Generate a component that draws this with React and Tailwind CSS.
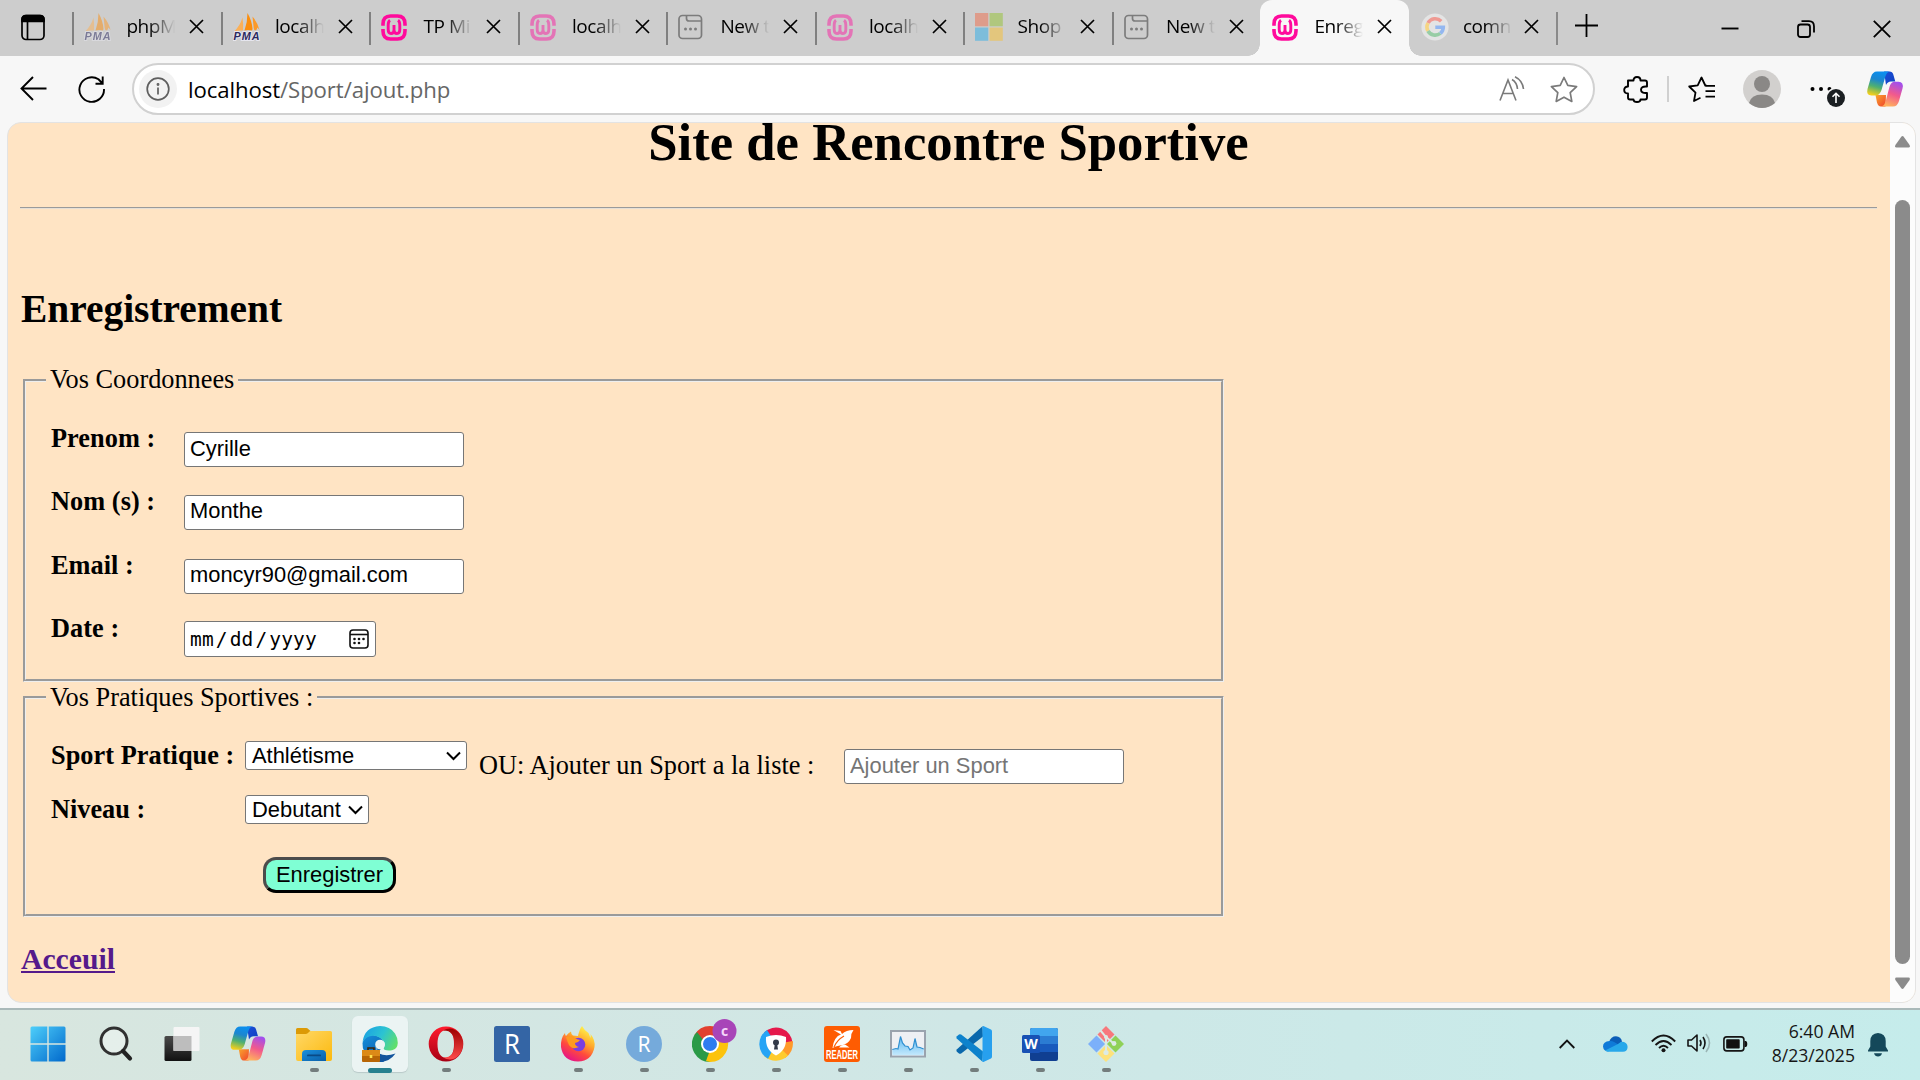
import React from "react";

const ui = "font-['Open_Sans','Noto_Sans',sans-serif]";

/* ---------- favicons ---------- */
function PmaIcon({ dim }) {
  return (
    <svg width="28" height="28" viewBox="0 0 28 28" className={dim ? "opacity-50" : ""}>
      <path d="M9.500 4.500 Q10.500 11 10 17.500 Q5 17 1 18.500 Q7 13 9.500 4.500Z" fill="#fbb057" />
      <path d="M14.500 0 Q19 8 19.500 16 L19 17.500 Q15 16.500 11.500 17.500 Q14.500 9 14.500 0Z" fill="#fb8d0c" />
      <path d="M19.500 3.500 Q25 10 26.500 17 L24.500 14.500 Q24 17 22 17.500 Q21 17 20.700 15Z" fill="#fb9a2a" />
      <text x="0.500" y="26.500" fontFamily="Liberation Sans" fontSize="10.800" fontWeight="700" fontStyle="italic" fill="#2b2960" stroke="#e6e6ee" strokeWidth="2" paintOrder="stroke" textLength="26">PMA</text>
    </svg>
  );
}
function WampIcon({ dim }) {
  return (
    <svg width="26" height="27" viewBox="0 0 26 27" className={dim ? "opacity-45" : ""} fill="none" stroke="#ff0a9c">
      <path d="M2 11.800 V10 Q2 2 9.500 2 H16.500 Q24 2 24 10 V11.800" strokeWidth="3.600" />
      <path d="M2 15 V17 Q2 25 9.500 25 H16.500 Q24 25 24 17 V15" strokeWidth="3.600" />
      <path d="M9 6.300 Q7.200 7.500 7.200 11 V15.500 Q7.200 19.500 10 19.500 Q13 19.500 13 16 V11 V16 Q13 19.500 16 19.500 Q18.800 19.500 18.800 15.500 V11 Q18.800 7.500 17 6.300" strokeWidth="2.900" />
    </svg>
  );
}
function NewTabIcon() {
  return (
    <svg width="25" height="26" viewBox="0 0 25 26" fill="none" stroke="#7c7c7c" strokeWidth="1.700">
      <rect x="1" y="1.500" width="22.500" height="23" rx="3.500" />
      <path d="M8.500 1.500 V4.500 Q8.500 7 11 7 H23" />
      <g fill="#7c7c7c" stroke="none">
        <circle cx="7.500" cy="15" r="1.500" /><circle cx="12.500" cy="15" r="1.500" /><circle cx="17.500" cy="15" r="1.500" />
      </g>
    </svg>
  );
}
function MsIcon() {
  return (
    <svg width="28" height="28" viewBox="0 0 28 28">
      <path fill="#de9c8b" d="M0 0h13.300v13.300H0z" /><path fill="#b0c77e" d="M14.500 0h13.300v13.300H14.500z" />
      <path fill="#7dbddb" d="M0 14.500h13.300v13.300H0z" /><path fill="#e3c67d" d="M14.500 14.500h13.300v13.300H14.500z" />
    </svg>
  );
}
function GoogleIcon() {
  return (
    <svg width="28" height="28" viewBox="0 0 28 28" fill="none" strokeWidth="3.600">
      <circle cx="14" cy="14" r="13.600" fill="#e4e4e4" />
      <path d="M20.200 8.200 A8.300 8.300 0 0 0 7 10" stroke="#ef9a93" />
      <path d="M7 10 A8.300 8.300 0 0 0 7 18" stroke="#f6d583" />
      <path d="M7 18 A8.300 8.300 0 0 0 19.300 20.400" stroke="#98cda5" />
      <path d="M19.300 20.400 A8.300 8.300 0 0 0 22.300 14.200 H14.300" stroke="#93b7f0" />
    </svg>
  );
}
const favicons = { pma: PmaIcon, wamp: WampIcon, blank: NewTabIcon, ms: MsIcon, google: GoogleIcon };

const tabs = [
  { icon: "pma", dim: true, title: "phpM" },
  { icon: "pma", title: "localh" },
  { icon: "wamp", title: "TP Mi" },
  { icon: "wamp", dim: true, title: "localh" },
  { icon: "blank", title: "New t" },
  { icon: "wamp", dim: true, title: "localh" },
  { icon: "ms", title: "Shop" },
  { icon: "blank", title: "New t" },
  { icon: "wamp", title: "Enreg", active: true },
  { icon: "google", title: "comn" },
];

function Tab({ icon, dim, title, active, index }) {
  const Icon = favicons[icon];
  const line = !active && index !== 9;
  return (
    <div className={"relative flex h-14 w-[148.5px] shrink-0 items-start " + (active ? "rounded-t-xl bg-[#f7f7f7]" : "")}>
      {active && (
        <>
          <span className="absolute bottom-0 -left-3 size-3 bg-[radial-gradient(circle_at_0_0,#cdcdcd_11.5px,#f7f7f7_12px)]" />
          <span className="absolute -right-3 bottom-0 size-3 bg-[radial-gradient(circle_at_100%_0,#cdcdcd_11.5px,#f7f7f7_12px)]" />
        </>
      )}
      <span className={"mt-3 h-[33px] w-0.5 shrink-0 " + (line ? "bg-[#808080]" : "")} />
      <span className="mt-[13px] ml-[10px] flex h-7 w-7 shrink-0 items-center"><Icon dim={dim} /></span>
      <span className={"mt-3 ml-[14px] w-[50px] shrink-0 overflow-hidden text-[19px] leading-7 tracking-[-0.4px] whitespace-nowrap text-black [mask-image:linear-gradient(to_right,black_45%,transparent_98%)] " + ui}>{title}</span>
      <svg className={"mt-[19px] shrink-0 " + (index === 9 ? "ml-[11px]" : "ml-[13px]")} width="15" height="15" viewBox="0 0 15 15" stroke="#000" strokeWidth="1.700"><path d="M1 1 L14 14 M14 1 L1 14" /></svg>
    </div>
  );
}

function TabBar() {
  return (
    <div className="flex h-14 bg-[#cdcdcd]">
      <div className="flex w-[72.4px] shrink-0 pt-[14px] pl-[21px]">
        <svg width="24" height="27" viewBox="0 0 24 27" fill="none" stroke="#000" strokeWidth="1.700">
          <rect x="1" y="1.500" width="22" height="24" rx="4" />
          <path d="M1 7.500 V5.500 Q1 1.500 5 1.500 H19 Q23 1.500 23 5.500 V7.500Z" fill="#000" />
          <path d="M6.500 7 V25.500" />
        </svg>
      </div>
      {tabs.map((t, i) => <Tab key={i} index={i} {...t} />)}
      <span className="mt-3 ml-[-1px] h-[33px] w-0.5 shrink-0 bg-[#8a8a8a]" />
      <svg className="mt-[14px] ml-[17px] shrink-0" width="23" height="23" viewBox="0 0 23 23" stroke="#000" strokeWidth="1.800"><path d="M0 11.500 H23 M11.500 0 V23" /></svg>
      <div className="ml-auto flex w-[228px] items-center pt-px">
        <span className="flex w-[76px] justify-center"><svg width="18" height="18" viewBox="0 0 18 18" stroke="#000" strokeWidth="1.900"><path d="M0.500 8.500 H17.500" /></svg></span>
        <span className="flex w-[76px] justify-center">
          <svg width="18" height="18" viewBox="0 0 18 18" fill="none" stroke="#000" strokeWidth="1.800"><rect x="1" y="4.500" width="12" height="12.500" rx="2.500" /><path d="M4.500 1.200 H12 Q17 1.200 17 6.500 V12.500" /></svg>
        </span>
        <span className="flex w-[76px] justify-center"><svg width="18" height="18" viewBox="0 0 18 18" stroke="#000" strokeWidth="1.800"><path d="M0.800 0.800 L17.200 17.200 M17.200 0.800 L0.800 17.200" /></svg></span>
      </div>
    </div>
  );
}

function CopilotIcon({ id, w, h }) {
  return (
    <svg width={w} height={h} viewBox="0 0 36 36">
      <defs>
        <linearGradient id={id + "a"} x1="0.600" y1="0" x2="0.350" y2="1"><stop offset="0" stopColor="#0a8ff0" /><stop offset="0.350" stopColor="#1c86cf" /><stop offset="0.650" stopColor="#4fb070" /><stop offset="1" stopColor="#f2cf1d" /></linearGradient>
        <linearGradient id={id + "b"} x1="0.700" y1="0" x2="0.350" y2="1"><stop offset="0" stopColor="#a14fee" /><stop offset="0.500" stopColor="#f25a8c" /><stop offset="1" stopColor="#ffb35c" /></linearGradient>
        <linearGradient id={id + "c"} x1="0" y1="0" x2="1" y2="1"><stop offset="0" stopColor="#1a4fd8" /><stop offset="1" stopColor="#1040c0" /></linearGradient>
        <linearGradient id={id + "d"} x1="0" y1="0" x2="1" y2="1"><stop offset="0" stopColor="#f9a52c" /><stop offset="1" stopColor="#f0442e" /></linearGradient>
      </defs>
      <path d="M17 0.500 H22.500 Q25.500 0.500 26.300 3.500 L28.300 10.500 H24 Q20.500 10.500 19 14Z" fill={"url(#" + id + "c)"} />
      <path d="M8.500 24 L10 31.500 Q11 35.500 14 35.500 H18.500 L19 24Z" fill={"url(#" + id + "d)"} />
      <path d="M10 0.500 H22 Q19.500 1.500 18.500 5 L14.500 19 Q12.800 24.500 8 24.500 H4.500 Q-1 24.500 0.500 18 L4 6 Q5.600 0.500 10 0.500Z" fill={"url(#" + id + "a)"} />
      <path d="M26 35.500 H14.500 Q17.500 34.500 18.500 31 L22.300 16.500 Q23.600 10.800 28 10.800 H31.500 Q37 10.800 35.500 17.500 L32 30 Q30.400 35.500 26 35.500Z" fill={"url(#" + id + "b)"} />
    </svg>
  );
}

function Toolbar() {
  return (
    <div className="flex h-[66px] bg-[#f7f7f7]">
      <svg className="mt-5 ml-5 shrink-0" width="27" height="25" viewBox="0 0 27 25" fill="none" stroke="#000" strokeWidth="1.900"><path d="M26.500 12.500 H1.500 M13 1 L1.500 12.500 L13 24" /></svg>
      <svg className="mt-5 ml-[31px] shrink-0" width="28" height="27" viewBox="0 0 28 27" fill="none" stroke="#000" strokeWidth="1.900"><path d="M26 13 A12.300 12.300 0 1 1 20.500 3.300 L24.500 7.500 M24.700 0.500 V7.700 H17.500" /></svg>
      <div className="mt-[7px] ml-[26px] flex h-[52px] w-[1463px] shrink-0 items-center rounded-full border-2 border-[#d1d1d1] bg-white">
        <span className="ml-[5px] flex size-[38px] items-center justify-center rounded-full bg-[#f2f2f2]">
          <svg width="24" height="24" viewBox="0 0 24 24" fill="none" stroke="#5f5f5f" strokeWidth="1.700"><circle cx="12" cy="12" r="10.800" /><path d="M12 10.500 V17.500" /><circle cx="12" cy="7.500" r="0.600" fill="#5f5f5f" /></svg>
        </span>
        <span className={"mt-px ml-[11px] text-[22.2px] leading-8 tracking-[-0.1px] whitespace-nowrap text-[#666] " + ui}><span className="text-black">localhost</span>/Sport/ajout.php</span>
        <svg className="ml-auto shrink-0" width="26" height="26" viewBox="0 0 26 26" fill="none" stroke="#7a7a7a" strokeWidth="1.600"><path d="M1 24.500 L9 4 L17 24.500 M4 17.500 H14 M13 3.500 Q18 6.500 18.500 13 M16 0.800 Q23.500 4.500 24.500 13" /></svg>
        <svg className="mr-[15px] ml-[25px] shrink-0" width="28" height="27" viewBox="0 0 28 27" fill="none" stroke="#7a7a7a" strokeWidth="1.700" strokeLinejoin="round"><path d="M14 1.500 L17.800 9.400 L26.600 10.600 L20.200 16.700 L21.800 25.400 L14 21.200 L6.200 25.400 L7.800 16.700 L1.400 10.600 L10.200 9.400Z" /></svg>
      </div>
      <svg className="mt-5 ml-7 shrink-0" width="26" height="27" viewBox="0 0 26 27" fill="none" stroke="#000" strokeWidth="1.900" strokeLinejoin="round"><path d="M5 4.500 H10.500 Q10.500 1 14 1 Q17.500 1 17.500 4.500 H22 Q24 4.500 24 6.500 V10.500 Q18 10 18 13.800 Q18 17.500 24 17 V21.500 Q24 23.500 22 23.500 H17.500 Q17.500 26 14 26 Q10.500 26 10.500 23.500 H7 Q5 23.500 5 21.500 V17.500 Q1.200 17.500 1.200 14 Q1.200 10.500 5 10.500Z" /></svg>
      <span className="mt-5 ml-[18px] h-[26px] w-0.5 shrink-0 bg-[#d0d0d0]" />
      <svg className="mt-5 ml-[19px] shrink-0" width="28" height="27" viewBox="0 0 28 27" fill="none" stroke="#000" strokeWidth="1.800" strokeLinejoin="round"><path d="M18.500 9.500 H17.300 L13.500 1.500 L9.700 9.300 L1.200 10.500 L7.500 16.700 L6 25 L12.500 21.800 M17.500 9.800 H27 M17.500 15.200 H27 M17.500 20.600 H27" /></svg>
      <svg className="mt-[14px] ml-[27px] shrink-0" width="38" height="38" viewBox="0 0 38 38">
        <circle cx="19" cy="19" r="19" fill="#d2d0ce" /><circle cx="19" cy="14" r="8" fill="#8a8886" /><path d="M6 33 Q8 24.500 19 24.500 Q30 24.500 32 33 Q26 38 19 38 Q12 38 6 33Z" fill="#8a8886" />
      </svg>
      <svg className="mt-[26px] ml-7 shrink-0" width="38" height="26" viewBox="0 0 38 26">
        <circle cx="3.500" cy="7" r="2" /><circle cx="12" cy="7" r="2" /><circle cx="20.500" cy="7" r="2" />
        <circle cx="27" cy="16" r="10.500" fill="#f7f7f7" /><circle cx="27" cy="16" r="9" fill="#1b1f22" />
        <path d="M27 21 V11.500 M23.500 14.800 L27 11.300 L30.500 14.800" stroke="#fff" strokeWidth="1.600" fill="none" />
      </svg>
      <span className="mt-[15px] ml-[19px]"><CopilotIcon id="ct" w="38" h="36" /></span>
    </div>
  );
}

/* ---------- page ---------- */
const field = "rounded-[3px] border border-[#767676] bg-white pl-[5px] pb-[2px] font-['Liberation_Sans',Arial,sans-serif] text-[21.9px] text-black placeholder:text-[#757575] outline-none";

function Row({ label, children }) {
  return (
    <div className="flex h-[63.4px] items-start">
      <label className="mt-px w-[133px] font-bold leading-[30px] tracking-[0.05px]">{label}</label>
      {children}
    </div>
  );
}

function Select({ value, className }) {
  return (
    <div className={"mt-px flex h-[29px] items-center justify-between rounded-[3px] border border-[#767676] bg-white pr-[5px] pl-[6px] font-['Liberation_Sans',Arial,sans-serif] text-[21.9px] leading-none " + className}>
      <span>{value}</span>
      <svg width="15" height="10" viewBox="0 0 15 10" fill="none" stroke="#000" strokeWidth="2"><path d="M1 1.500 L7.500 8 L14 1.500" /></svg>
    </div>
  );
}

const fieldset = "ml-[3px] w-[1201px] border-[3px] border-[#eeeeee] pl-5 [border-style:groove]";

function Page() {
  return (
    <div className="ml-[7px] flex h-[881px] w-[1909px] overflow-hidden rounded-[14px] border border-[#e3e3e3] bg-[#ffe4c4]">
      <main className="h-full grow overflow-hidden pr-[13px] pl-[12px] font-['Liberation_Serif','Times_New_Roman',serif] text-[26.3px] text-black">
        <h1 className="mt-[-11px] text-center text-[52.7px] leading-[60px] font-bold">Site de Rencontre Sportive</h1>
        <div className="mt-[35px] h-[2px] border-t border-b border-t-[#9a9a9a] border-b-[#e6dfd6]" />
        <h2 className="mt-[78px] ml-px text-[39.4px] leading-[44px] font-bold">Enregistrement</h2>
        <fieldset className={"mt-[34px] h-[317px] " + fieldset}>
          <legend className="px-1 pb-px leading-[30px]">Vos Coordonnees</legend>
          <div className="pt-[27px] pl-[5px]">
            <Row label="Prenom :"><input className={"mt-[9px] h-[35px] w-[280px] " + field} defaultValue="Cyrille" /></Row>
            <Row label="Nom (s) :"><input className={"mt-[8.5px] h-[35px] w-[280px] " + field} defaultValue="Monthe" /></Row>
            <Row label="Email :"><input className={"mt-[9px] h-[35px] w-[280px] " + field} defaultValue="moncyr90@gmail.com" /></Row>
            <Row label="Date :">
              <div className="mt-2 flex h-9 w-[192px] items-center justify-between rounded-[3px] border border-[#767676] bg-white pr-[6px] pl-[5px] font-['DejaVu_Sans_Mono',monospace] text-[19.5px] tracking-[0.15px]">
                <span className="flex pt-px"><span>mm</span><span className="px-[2px]">/</span><span>dd</span><span className="px-[2px]">/</span><span>yyyy</span></span>
                <svg width="20" height="20" viewBox="0 0 20 20" fill="none" stroke="#111" strokeWidth="1.600">
                  <rect x="1" y="1" width="18" height="18" rx="3" /><path d="M1 5.500 H19" />
                  <g fill="#111" stroke="none"><circle cx="5.500" cy="14" r="1.300" /><circle cx="10" cy="10" r="1.300" /><circle cx="14.500" cy="10" r="1.300" /><circle cx="5.500" cy="10" r="1.300" /><circle cx="10" cy="14" r="1.300" /></g>
                </svg>
              </div>
            </Row>
          </div>
        </fieldset>
        <fieldset className={"mt-px h-[234px] " + fieldset}>
          <legend className="px-1 leading-[29px]">Vos Pratiques Sportives :</legend>
          <div className="pt-[28px] pl-[5px]">
            <div className="flex h-[54px] items-start leading-[30px]">
              <label className="mt-px w-[194px] font-bold tracking-[0.05px]">Sport Pratique :</label>
              <Select value="Athlétisme" className="w-[222px]" />
              <span className="mt-[11px] ml-3 w-[365px] whitespace-nowrap">OU: Ajouter un Sport a la liste :</span>
              <input className={"mt-[9px] h-[35px] w-[280px] " + field} placeholder="Ajouter un Sport" />
            </div>
            <div className="flex h-[63px] items-start leading-[30px]">
              <label className="mt-px w-[194px] font-bold">Niveau :</label>
              <Select value="Debutant" className="w-[124px]" />
            </div>
            <button className="ml-[212px] flex h-9 w-[133px] items-center justify-center rounded-[13px] border-[3px] border-t-[#4c4c4c] border-r-black border-b-black border-l-[#4c4c4c] bg-[#7fffd4] pb-px font-['Liberation_Sans',Arial,sans-serif] text-[21.9px] leading-none">Enregistrer</button>
          </div>
        </fieldset>
        <a className="mt-[25px] ml-px inline-block text-[29.7px] leading-[34px] font-bold text-[#551a8b] underline decoration-2 underline-offset-2">Acceuil</a>
      </main>
      <div className="flex w-[25px] shrink-0 flex-col items-center bg-[#fcfcfc] pt-[13px]">
        <svg width="15" height="12" viewBox="0 0 15 12" fill="#8b8b8b"><path d="M6.300 0.700 Q7.500 -0.700 8.700 0.700 L14.600 9 Q15.500 11.500 13.500 11.500 H1.500 Q-0.500 11.500 0.400 9Z" /></svg>
        <span className="mt-[52px] h-[764px] w-[15px] rounded-full bg-[#8b8b8b]" />
        <svg className="mt-[13px]" width="15" height="12" viewBox="0 0 15 12" fill="#8b8b8b"><path d="M6.300 11.300 Q7.500 12.500 8.700 11.300 L14.600 3 Q15.500 0.500 13.500 0.500 H1.500 Q-0.500 0.500 0.400 3Z" /></svg>
      </div>
    </div>
  );
}

/* ---------- taskbar ---------- */
const S = ({ children, ...p }) => <svg width="36" height="36" viewBox="0 0 36 36" {...p}>{children}</svg>;

const StartIcon = () => (
  <S>
    <defs><linearGradient id="win" gradientUnits="userSpaceOnUse" x1="0" y1="0" x2="36" y2="36"><stop offset="0" stopColor="#4fd0fb" /><stop offset="1" stopColor="#0067cb" /></linearGradient></defs>
    <g fill="url(#win)"><path d="M2 0.500H17.300V17.300H0.500V2Q0.500 0.500 2 0.500Z" /><path d="M18.700 0.500H34Q35.500 0.500 35.500 2V17.300H18.700Z" /><path d="M0.500 18.700H17.300V35.500H2Q0.500 35.500 0.500 34Z" /><path d="M18.700 18.700H35.500V34Q35.500 35.500 34 35.500H18.700Z" /></g>
  </S>
);
const SearchIcon = () => (
  <S fill="none"><circle cx="16" cy="15" r="13" fill="#ffffff" fillOpacity="0.35" stroke="#303030" strokeWidth="3" /><path d="M25 25 L32 32.500" stroke="#222" strokeWidth="4.200" strokeLinecap="round" /></S>
);
const TaskViewIcon = () => (
  <S>
    <defs><linearGradient id="tv" x1="0" y1="0" x2="0" y2="1"><stop offset="0" stopColor="#4a4a4a" /><stop offset="1" stopColor="#111" /></linearGradient></defs>
    <rect x="0.500" y="10" width="27" height="25" rx="1.500" fill="url(#tv)" />
    <rect x="9.500" y="1" width="26" height="24" rx="1" fill="#f5f5f5" />
    <rect x="9.500" y="10" width="18" height="15" fill="#bdbdbd" />
  </S>
);
const FolderIcon = () => (
  <S>
    <defs><linearGradient id="fo" x1="0" y1="0" x2="1" y2="1"><stop offset="0" stopColor="#ffd867" /><stop offset="1" stopColor="#fcb90e" /></linearGradient><linearGradient id="fb" x1="0" y1="0" x2="1" y2="1"><stop offset="0" stopColor="#1a90dd" /><stop offset="1" stopColor="#0b5fa8" /></linearGradient></defs>
    <path d="M0 3.500 Q0 2 1.500 2 H10 Q11.500 2 12.500 3.200 L14.500 5 V12 H0Z" fill="#dc9a06" />
    <path d="M0 8 H9.500 Q11 8 12 7 L13.500 5.500 Q14 5 15 5 H34.500 Q36 5 36 6.500 V33 Q36 35 34 35 H2 Q0 35 0 33Z" fill="url(#fo)" />
    <path d="M6 35 V28 Q6 24 10 24 H26 Q30 24 30 28 V35Z" fill="url(#fb)" /><rect x="11" y="28.500" width="14" height="1.800" rx="0.900" fill="#0a4a85" />
  </S>
);
const EdgeIcon = () => (
  <S>
    <defs>
      <linearGradient id="ed1" x1="0" y1="0.300" x2="1" y2="0.700"><stop offset="0" stopColor="#1ba3e2" /><stop offset="0.500" stopColor="#2cc3d2" /><stop offset="1" stopColor="#62e067" /></linearGradient>
      <linearGradient id="ed2" x1="0" y1="0" x2="0.500" y2="1"><stop offset="0" stopColor="#1690dc" /><stop offset="1" stopColor="#0c5fae" /></linearGradient>
    </defs>
    <path d="M0.500 17 Q3 9 11 9 Q20 10 22 17 L17 26 L22 36 H18 Q8 36 3 27 Q0 22 0.500 17Z" fill="url(#ed2)" />
    <path d="M18 0 Q28 0 33 7.500 Q36 12 35.800 17 Q35.500 23 30 24.200 Q25.500 25 22.500 23.700 Q21 23 22.300 21 Q24 17.500 21 14.500 Q17 10 11 9.800 Q4 10 0.500 16 Q2.500 1 18 0Z" fill="url(#ed1)" />
    <circle cx="18" cy="18.500" r="4.800" fill="#ebf4f3" />
    <path d="M13.300 19 Q15 28 25 28.500 Q30 28.500 34 26 L34 27 Q28 30 22 29 Q14 27 13.300 19Z" fill="#ebf4f3" />
    <path d="M17 27.500 Q24 31 33.500 27.500 Q28 35.500 18 36Z" fill="#12549c" />
    <path d="M6 24 V22 H12 V24" fill="none" stroke="#3c2509" strokeWidth="1.600" />
    <rect x="0" y="24" width="18" height="12" rx="1" fill="#b86606" /><rect x="0" y="24" width="18" height="6" fill="#dc8a18" /><rect x="7.700" y="29" width="2.600" height="3" fill="#ffe14d" />
  </S>
);
const OperaIcon = () => (
  <S>
    <defs><linearGradient id="op" x1="0" y1="0" x2="0" y2="1"><stop offset="0" stopColor="#ff1b2d" /><stop offset="1" stopColor="#a70014" /></linearGradient><linearGradient id="oq" x1="0" y1="0" x2="0" y2="1"><stop offset="0" stopColor="#9c0000" /><stop offset="1" stopColor="#ff4b4b" /></linearGradient></defs>
    <path fillRule="evenodd" d="M18 0.500 A17.300 17.500 0 1 0 18 35.500 A17.300 17.500 0 1 0 18 0.500Z M18 4 Q26 5 26 18 Q26 31 18 32 Q9.500 31 9.500 18 Q9.500 5 18 4Z" fill="url(#op)" />
    <path d="M15 4.500 Q24 -0.500 31 7 Q35 12 35 18 Q35 24 31 29 Q24 36.500 15 31.500 Q26.500 32 26.500 18 Q26.500 4 15 4.500Z" fill="url(#oq)" />
  </S>
);
const RIcon = () => (
  <S><rect width="36" height="36" rx="2.500" fill="#3465a5" /><text x="18" y="28" textAnchor="middle" fontFamily="Noto Sans" fontSize="28" fill="#fff" textLength="16" lengthAdjust="spacingAndGlyphs">R</text></S>
);
const FirefoxIcon = () => (
  <S>
    <defs><linearGradient id="ff" x1="0.800" y1="0.100" x2="0.300" y2="1"><stop offset="0" stopColor="#fff04a" /><stop offset="0.350" stopColor="#ffa82b" /><stop offset="0.650" stopColor="#ff4a3c" /><stop offset="1" stopColor="#e5128a" /></linearGradient></defs>
    <path d="M22 0 Q24 4 28.500 7 L30.500 12 Q31 9.500 30.500 8 Q35.500 14 34.500 21 Q32 35 18 35.500 Q3 35 1 21 Q0.500 12 5 7 Q5 9 6 10 Q8 7 11 5.500 Q11 8.500 13 9.500 L18 10 Q19.500 3 22 0Z" fill="url(#ff)" />
    <circle cx="18.500" cy="18.500" r="6.800" fill="#7a3ee0" />
    <path d="M6 11 Q10 9.500 13 10 Q15 13 20 14 Q18 17 15 17 Q15 20 19 21 Q12 24 9 19 Q7 15 6 11Z" fill="#ff9a1f" />
  </S>
);
const RStudioIcon = () => (
  <S><circle cx="18" cy="18" r="18" fill="#75aadb" /><text x="18" y="25.500" textAnchor="middle" fontFamily="Noto Sans" fontSize="21" fill="#fff">R</text></S>
);
const ChromeIcon = () => (
  <svg width="46" height="44" viewBox="0 -8 46 44" className="ml-[9px] mt-[-8px] shrink-0">
    <path d="M18 18 L2.400 9 A18 18 0 0 1 33.600 9Z" fill="#e2402f" /><path d="M18 18 L33.600 9 A18 18 0 0 1 18 36Z" fill="#fcc30c" /><path d="M18 18 L18 36 A18 18 0 0 1 2.400 9Z" fill="#2a9a47" />
    <path d="M18 9.500 H33.800 L30 4.500 H18Z" fill="#e2402f" /><path d="M25.400 22.200 L18 36 L14 35 L18 24Z" fill="#fcc30c" /><path d="M10.600 22.200 L2.400 9 L5 6 L12 15Z" fill="#2a9a47" />
    <circle cx="18" cy="18" r="9" fill="#fff" /><circle cx="18" cy="18" r="7" fill="#2f7cf0" />
    <circle cx="32.500" cy="5" r="12" fill="#a845b8" /><text x="32.500" y="9.500" textAnchor="middle" fontFamily="Open Sans" fontSize="14" fontWeight="700" fill="#f5d7fa">c</text>
  </svg>
);
const ShieldIcon = () => (
  <S>
    <path d="M18 18 L6 6.500 A16.800 16.800 0 0 1 34.700 17Z" fill="#e5184b" /><path d="M18 18 L34.700 15 A16.800 16.800 0 0 1 27 32Z" fill="#ff9a2a" /><path d="M18 18 L30 29.500 A16.800 16.800 0 0 1 6 30Z" fill="#fecb2e" /><path d="M18 18 L10 32.800 A16.800 16.800 0 0 1 9 4Z" fill="#26a4f5" />
    <path d="M8 11 Q18 7 28 11 Q29 24 18 29.500 Q7 24 8 11Z" fill="#fff" /><circle cx="18" cy="16.500" r="3" fill="#333a48" /><path d="M17 17 H19 L20 23.500 H16Z" fill="#333a48" />
  </S>
);
const ReaderIcon = () => (
  <S><rect width="36" height="36" rx="3" fill="#fe5c02" /><path d="M9.500 4 L16.500 5 L18 8 Q22 4 29.500 4 Q26.500 8 27 12 Q24.500 18.500 16 19.500 Q11 20 8.500 22 Q10 10.500 17 8.500Z" fill="#fff" /><path d="M21 18.500 L25.500 21.500 H15 L17 19.500Z" fill="#fff" /><path d="M10 21 Q13 14 20 10" fill="none" stroke="#fe5c02" strokeWidth="1.200" /><text x="18" y="33" textAnchor="middle" fontFamily="Liberation Sans" fontWeight="700" fontSize="12" fill="#fff" textLength="32" lengthAdjust="spacingAndGlyphs">READER</text></S>
);
const MonitorIcon = () => (
  <S>
    <defs><linearGradient id="mo" x1="0" y1="0" x2="0" y2="1"><stop offset="0" stopColor="#5fb8f0" /><stop offset="1" stopColor="#c4e9fc" /></linearGradient></defs>
    <rect x="1" y="5" width="34" height="25.500" fill="#eef0f4" stroke="#9aa3ae" strokeWidth="2" />
    <path d="M2.300 23.500 L6 22.500 L8 23 L10.500 10.500 L12.500 17 L15 20 L18 20.500 L20 24 L23 22 L25 12.500 L27 21 L30 21.500 L33.700 23 V29.300 H2.300Z" fill="url(#mo)" />
    <path d="M2.300 23.500 L6 22.500 L8 23 L10.500 10.500 L12.500 17 L15 20 L18 20.500 L20 24 L23 22 L25 12.500 L27 21 L30 21.500 L33.700 23" fill="none" stroke="#2f8fd0" strokeWidth="1.200" />
  </S>
);
const VsIcon = () => (
  <S>
    <path d="M26.500 0.300 L0.700 23.500 Q0 24.700 0.900 25.700 L3 27.600 Q4 28.200 5.200 27.400 L27 10.500Z" fill="#0a68ac" />
    <path d="M26.500 35.700 L0.700 12.500 Q0 11.300 0.900 10.300 L3 8.400 Q4 7.800 5.200 8.600 L27 25.500Z" fill="#0d82cc" />
    <path d="M26.500 0.300 Q27.500 -0.200 28.500 0.400 L35 3.500 Q36 4.200 36 5.500 V30.500 Q36 31.800 35 32.500 L28.500 35.600 Q27.500 36.200 26.500 35.700Z" fill="#27a0ee" />
  </S>
);
const WordIcon = () => (
  <S><rect x="8" y="2" width="28" height="33" rx="2" fill="#103f91" /><path d="M8 4Q8 2 10 2H34Q36 2 36 4V10H8Z" fill="#41a5ee" /><path d="M8 10H36V18H8Z" fill="#2b7cd3" /><path d="M8 18H36V26H8Z" fill="#185abd" /><rect x="0" y="9" width="18" height="18" rx="1.500" fill="#1851b4" /><text x="9" y="23" textAnchor="middle" fontFamily="Open Sans" fontWeight="700" fontSize="14" fill="#fff">W</text></S>
);
const GitIcon = () => (
  <S>
    <path d="M18 0 L26.500 8.500 L18 17 L9.500 8.500Z" fill="#f7787c" /><path d="M27.500 9.500 L36 18 L27.500 26.500 L19 18Z" fill="#8fd158" /><path d="M8.500 9.500 L17 18 L8.500 26.500 L0 18Z" fill="#7cb0fa" /><path d="M18 19 L26.500 27.500 L18 36 L9.500 27.500Z" fill="#fde27c" />
    <path d="M12.500 4.500 L18 11 V27 M18 11 Q22 14 26 18" stroke="#dcebe4" strokeWidth="2" fill="none" /><circle cx="18" cy="11" r="2" fill="#dcebe4" /><circle cx="18" cy="26.500" r="2.600" fill="#dcebe4" /><circle cx="26" cy="17.500" r="2.400" fill="#dcebe4" />
  </S>
);
const CopilotTask = () => <CopilotIcon id="cb" w="36" h="35" />;

const apps = [
  [StartIcon], [SearchIcon], [TaskViewIcon], [CopilotTask], [FolderIcon, "dot"], [EdgeIcon, "active"], [OperaIcon, "dot"], [RIcon],
  [FirefoxIcon, "dot"], [RStudioIcon, "dot"], [ChromeIcon, "dot"], [ShieldIcon, "dot"], [ReaderIcon, "dot"], [MonitorIcon, "dot"],
  [VsIcon, "dot"], [WordIcon, "dot"], [GitIcon, "dot"],
];

function Taskbar() {
  return (
    <div className="flex h-[72px] border-t-2 border-[#aab9b9] bg-linear-to-r from-[#d8e6df] via-[#cfe7e6] to-[#c5eceb] pl-[15px]">
      {apps.map(([Icon, state], i) => (
        <div key={i} className={"flex shrink-0 pt-[6px] " + (i === 0 ? "w-[68px] pl-[5px]" : "w-[66px] justify-center")}>
          <div className={"flex h-14 w-14 flex-col items-center pt-[10px] " + (state === "active" ? "rounded-md bg-[#ebf4f3] shadow-[0_1px_1px_#b9c9c9]" : "")}>
            <span className="flex h-9 w-9 justify-center"><Icon /></span>
            {state === "dot" && <span className="mt-1.5 h-[5px] w-[9px] rounded-full bg-[#737d7d]" />}
            {state === "active" && <span className="mt-1.5 h-[5px] w-6 shrink-0 rounded-full bg-[#26808f]" />}
          </div>
        </div>
      ))}
      <div className="ml-auto flex shrink-0">
        <svg className="mt-[29px]" width="16" height="10" viewBox="0 0 16 10" fill="none" stroke="#111" strokeWidth="1.800"><path d="M0.700 9 L8 1.500 L15.300 9" /></svg>
        <svg className="mt-[26px] ml-7" width="25" height="16" viewBox="0 0 25 16"><path d="M6 6 Q8 0.300 13 0.300 Q18 0.500 19 5.500 L14 10Z" fill="#0a5db8" /><path d="M6.500 5 Q0 5.500 0 10.500 Q0.500 15 5 15.500 L16 9.500 Q11 4.500 6.500 5Z" fill="#0f7ad8" /><path d="M15 8 Q19 4.500 22 6.500 Q25 8 24.500 12 Q24 15.700 20 15.700 H5 Q3 15.500 2 14.500Z" fill="#28a8ea" /></svg>
        <svg className="mt-[24px] ml-[23px]" width="25" height="19" viewBox="0 0 25 19" fill="none" stroke="#151515" strokeWidth="1.800"><path d="M0.800 7.500 Q12.500 -4.500 24.200 7.500 M4.500 11 Q12.500 3 20.500 11 M8 14 Q12.500 9.500 17 14" /><circle cx="12.500" cy="16.200" r="2" fill="#151515" stroke="none" /></svg>
        <svg className="mt-[23px] ml-[11px]" width="24" height="20" viewBox="0 0 24 20" fill="none" stroke="#151515" strokeWidth="1.600"><path d="M1 7 H4.500 L10 2 V18 L4.500 13 H1Z" strokeLinejoin="round" /><path d="M13 7 Q15 10 13 13 M16 4 Q20 10 16 16" /><path d="M19 1 Q26 10 19 19" stroke="#9bb5b5" /></svg>
        <svg className="mt-[26px] ml-3" width="25" height="16" viewBox="0 0 25 16" fill="none" stroke="#151515" strokeWidth="1.600"><rect x="0.900" y="0.900" width="20" height="14" rx="2.800" /><rect x="3.200" y="3.200" width="13.500" height="9.400" rx="0.800" fill="#111" stroke="none" /><path d="M21.500 5 H23 Q24.300 5.500 24.300 8 Q24.300 10.500 23 11 H21.500Z" fill="#111" stroke="none" /></svg>
        <div className={"mt-[9px] ml-[22px] w-[85px] text-right text-[17.6px] leading-[24px] whitespace-nowrap text-[#161616] " + ui}><div>6:40 AM</div><div>8/23/2025</div></div>
        <svg className="mt-[23px] mr-8 ml-[13px]" width="20" height="24" viewBox="0 0 20 24" fill="#14485a"><path d="M10 0 Q17.500 0.500 17.700 8 V13.500 L20 17.500 V18.500 H0 V17.500 L2.300 13.500 V8 Q2.500 0.500 10 0Z" /><path d="M6 20.300 H14 Q13 23.500 10 23.500 Q7 23.500 6 20.300Z" /></svg>
      </div>
    </div>
  );
}

export default function App() {
  return (
    <div className="flex h-[1080px] w-[1920px] flex-col overflow-hidden bg-[#f7f7f7]">
      <TabBar />
      <Toolbar />
      <Page />
      <div className="grow" />
      <Taskbar />
    </div>
  );
}
